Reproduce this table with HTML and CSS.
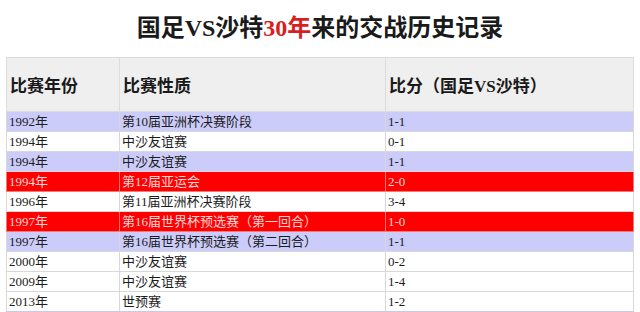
FILE: index.html
```html
<!DOCTYPE html>
<html lang="zh">
<head>
<meta charset="utf-8">
<link rel="stylesheet" href="styles.css">
</head>
<body>
<h1 class="title">国足VS沙特<span class="hl">30年</span>来的交战历史记录</h1>
<table class="record">
  <colgroup>
    <col class="c1"><col class="c2"><col class="c3">
  </colgroup>
  <thead>
    <tr><th>比赛年份</th><th>比赛性质</th><th>比分（国足VS沙特）</th></tr>
  </thead>
  <tbody>
    <tr class="lav"><td>1992年</td><td>第10届亚洲杯决赛阶段</td><td>1-1</td></tr>
    <tr><td>1994年</td><td>中沙友谊赛</td><td>0-1</td></tr>
    <tr class="lav"><td>1994年</td><td>中沙友谊赛</td><td>1-1</td></tr>
    <tr class="red"><td>1994年</td><td>第12届亚运会</td><td>2-0</td></tr>
    <tr><td>1996年</td><td>第11届亚洲杯决赛阶段</td><td>3-4</td></tr>
    <tr class="red"><td>1997年</td><td>第16届世界杯预选赛（第一回合）</td><td>1-0</td></tr>
    <tr class="lav"><td>1997年</td><td>第16届世界杯预选赛（第二回合）</td><td>1-1</td></tr>
    <tr><td>2000年</td><td>中沙友谊赛</td><td>0-2</td></tr>
    <tr><td>2009年</td><td>中沙友谊赛</td><td>1-4</td></tr>
    <tr class="last"><td>2013年</td><td>世预赛</td><td>1-2</td></tr>
  </tbody>
</table>
</body>
</html>
```

FILE: styles.css
```css
html, body {
  margin: 0;
  padding: 0;
  background: #ffffff;
  overflow: hidden;
}
body {
  font-family: "Liberation Serif", "Noto Sans CJK SC", serif;
  color: #111111;
}
.title {
  margin: 0;
  height: 57px;
  line-height: 56px;
  text-align: center;
  font-size: 24px;
  font-weight: bold;
  color: #1a1a1a;
}
.title .hl {
  color: #d81e1e;
}
.record {
  margin-left: 6px;
  width: 627px;
  border-collapse: collapse;
  table-layout: fixed;
}
.c1 { width: 113px; }
.c2 { width: 266px; }
.c3 { width: 248px; }
.record th {
  height: 53px;
  padding: 0 0 0 3px;
  text-align: left;
  font-size: 17px;
  font-weight: bold;
  background: #efefef;
  border: 1px solid #dcdcdc;
  color: #1a1a1a;
}
.record td {
  height: 19px;
  padding: 0 0 0 2px;
  font-size: 13px;
  line-height: 19px;
  border: 1px solid #d8d8d8;
  background: #ffffff;
  white-space: nowrap;
  color: #1c1c1c;
}
.record tr.lav td {
  background: #ccccfa;
}
.record tr.red td {
  background: #fe0000;
  color: #ffd6d6;
  border-color: #f27a7a;
}
.record tr.last td {
  height: 18px;
  border-bottom: 2px solid #c8c8f0;
}
```
